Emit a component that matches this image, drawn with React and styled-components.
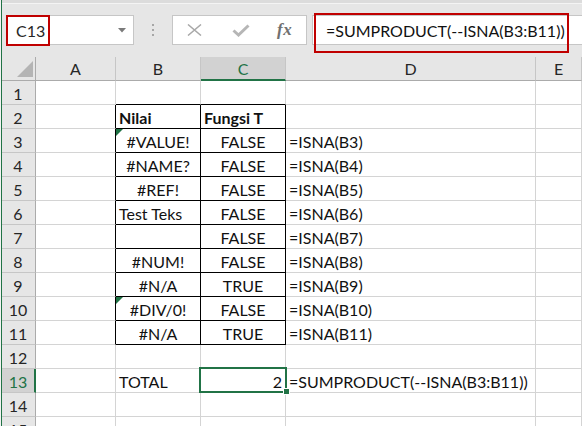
import React from 'react';
import styled, { createGlobalStyle } from 'styled-components';

const Global = createGlobalStyle`
  html, body { margin: 0; padding: 0; background: #fff; overflow: hidden; }
  body { font-family: Lato, "Liberation Sans", sans-serif; }
  #root { width: 582px; height: 426px; }
`;

const GREEN = '#217346';
const GRID = '#d4d4d4';

const Frame = styled.div`
  display: flex;
  width: 582px;
  height: 426px;
  overflow: hidden;
  background: #f3f3f3;
`;

const EdgeLine = styled.div`
  width: 1px;
  margin-left: 1px;
  background: ${GREEN};
  flex: none;
`;

const Main = styled.div`
  flex: 1;
  display: flex;
  flex-direction: column;
  min-width: 0;
  background: #fff;
`;

const Toolbar = styled.div`
  height: 57px;
  box-sizing: border-box;
  flex: none;
  display: flex;
  align-items: flex-start;
  padding: 15px 0 0 4px;
  background: #e6e6e6;
  box-shadow: inset 0 3px 0 #dcdcdc, inset 0 4px 0 #f4f4f4;
`;

const NameBox = styled.div`
  position: relative;
  width: 128px;
  height: 30px;
  box-sizing: border-box;
  flex: none;
  background: #fff;
  border: 1px solid #c6c6c6;
  display: flex;
  align-items: center;
  justify-content: space-between;
  padding: 1px 7px 0 9px;
  font-size: 16px;
  color: #262626;
`;

const RedMark = styled.div`
  position: absolute;
  box-sizing: border-box;
  border: 2px solid #c00000;
  pointer-events: none;
`;

const Grip = styled.div`
  display: flex;
  flex-direction: column;
  gap: 3px;
  margin: 9px 0 0 18px;
  flex: none;
  span {
    display: block;
    width: 2px;
    height: 2px;
    background: #a6a6a6;
  }
`;

const FxBox = styled.div`
  width: 135px;
  height: 30px;
  margin-left: 18px;
  box-sizing: border-box;
  flex: none;
  background: #fff;
  border: 1px solid #c6c6c6;
  display: flex;
  align-items: center;
  padding-left: 14px;
`;

const IconSlot = styled.div`
  display: flex;
  align-items: center;
  margin-left: ${p => p.$ml || 0}px;
  margin-top: ${p => p.$mt || 0}px;
`;

const FxText = styled.span`
  font-family: "Liberation Serif", "DejaVu Serif", serif;
  font-style: italic;
  font-weight: 700;
  font-size: 17px;
  color: #707070;
  letter-spacing: 0.5px;
`;

const FormulaInput = styled.div`
  position: relative;
  flex: 1;
  height: 30px;
  margin-left: 5px;
  box-sizing: border-box;
  background: #fff;
  border: 1px solid #c6c6c6;
  border-right: none;
  display: flex;
  align-items: center;
  padding: 1px 0 0 13px;
  font-size: 16px;
  color: #111;
  white-space: nowrap;
`;

const Sheet = styled.div`
  flex: 1;
  display: grid;
  grid-template-columns: 34px 80px 85px 85px 250px 1fr;
  grid-auto-rows: 24px;
  font-size: 16px;
  color: #111;
  background: #fff;
`;

const Corner = styled.div`
  box-sizing: border-box;
  background: #e6e6e6;
  border-right: 1px solid #ababab;
  border-bottom: 1px solid #ababab;
  display: flex;
  justify-content: flex-end;
  align-items: flex-end;
  padding: 0 2px 3px 0;
`;

const ColHead = styled.div`
  box-sizing: border-box;
  background: ${p => (p.$sel ? '#d2d2d2' : '#e6e6e6')};
  color: ${p => (p.$sel ? GREEN : '#262626')};
  border-right: 1px solid #c6c6c6;
  border-bottom: ${p => (p.$sel ? `2px solid ${GREEN}` : '1px solid #ababab')};
  display: flex;
  align-items: center;
  justify-content: center;
  padding-top: ${p => (p.$sel ? 1 : 0)}px;
`;

const RowHead = styled.div`
  box-sizing: border-box;
  background: ${p => (p.$sel ? '#d2d2d2' : '#e6e6e6')};
  color: ${p => (p.$sel ? GREEN : '#262626')};
  border-right: ${p => (p.$sel ? `2px solid ${GREEN}` : '1px solid #ababab')};
  border-bottom: 1px solid #c6c6c6;
  display: flex;
  align-items: center;
  justify-content: center;
  padding: 2px ${p => (p.$sel ? 0 : 1)}px 0 0;
`;

const Cell = styled.div`
  position: relative;
  box-sizing: border-box;
  border-right: 1px solid ${p => p.$br || GRID};
  border-bottom: 1px solid ${p => p.$bb || GRID};
  display: flex;
  align-items: center;
  justify-content: ${p => (p.$align === 'center' ? 'center' : p.$align === 'right' ? 'flex-end' : 'flex-start')};
  padding: 2px 3px 0 3px;
  font-weight: ${p => (p.$bold ? 700 : 400)};
  white-space: nowrap;
  z-index: ${p => (p.$sel ? 2 : 'auto')};
`;

const ErrorFlag = styled.svg`
  position: absolute;
  left: 0;
  top: 0;
`;

const Selection = styled.div`
  position: absolute;
  left: -2px;
  top: -2px;
  right: -2px;
  bottom: -1px;
  border: 2px solid ${GREEN};
  pointer-events: none;
`;

const FillHandle = styled.div`
  position: absolute;
  right: -5px;
  bottom: -3px;
  width: 5px;
  height: 5px;
  background: ${GREEN};
  border: 1px solid #fff;
`;

const COLS = ['A', 'B', 'C', 'D', 'E'];
const SEL_COL = 'C';
const SEL_ROW = 13;

const rows = [
  { n: 1 },
  { n: 2, b: 'Nilai', bAlign: 'left', c: 'Fungsi T', cAlign: 'left', bold: true },
  { n: 3, b: '#VALUE!', c: 'FALSE', d: '=ISNA(B3)', flag: true },
  { n: 4, b: '#NAME?', c: 'FALSE', d: '=ISNA(B4)' },
  { n: 5, b: '#REF!', c: 'FALSE', d: '=ISNA(B5)' },
  { n: 6, b: 'Test Teks', bAlign: 'left', c: 'FALSE', d: '=ISNA(B6)' },
  { n: 7, b: '', c: 'FALSE', d: '=ISNA(B7)' },
  { n: 8, b: '#NUM!', c: 'FALSE', d: '=ISNA(B8)' },
  { n: 9, b: '#N/A', c: 'TRUE', d: '=ISNA(B9)' },
  { n: 10, b: '#DIV/0!', c: 'FALSE', d: '=ISNA(B10)', flag: true },
  { n: 11, b: '#N/A', c: 'TRUE', d: '=ISNA(B11)' },
  { n: 12 },
  { n: 13, b: 'TOTAL', bAlign: 'left', c: '2', cAlign: 'right', d: '=SUMPRODUCT(--ISNA(B3:B11))' },
  { n: 14 },
  { n: 15 },
];

const inTable = n => n >= 2 && n <= 11;

function SheetRow({ r }) {
  const boxed = inTable(r.n);
  const topEdge = r.n === 1;
  const black = '#000';
  const sel = r.n === SEL_ROW;
  return (
    <>
      <RowHead $sel={sel}>{r.n}</RowHead>
      <Cell $br={boxed ? black : undefined} />
      <Cell
        $br={boxed ? black : undefined}
        $bb={boxed || topEdge ? black : undefined}
        $align={r.bAlign || 'center'}
        $bold={r.bold}
      >
        {r.flag && (
          <ErrorFlag width="7" height="7" viewBox="0 0 7 7">
            <polygon points="0,0 7,0 0,7" fill="#1f7244" />
          </ErrorFlag>
        )}
        {r.b}
      </Cell>
      <Cell
        $br={boxed ? black : undefined}
        $bb={boxed || topEdge ? black : undefined}
        $align={r.cAlign || 'center'}
        $bold={r.bold}
        $sel={sel}
      >
        {r.c}
        {sel && (
          <>
            <Selection />
            <FillHandle />
          </>
        )}
      </Cell>
      <Cell $align="left">{r.d}</Cell>
      <Cell />
    </>
  );
}

export default function App() {
  return (
    <>
      <Global />
      <Frame>
        <EdgeLine />
        <Main>
          <Toolbar>
            <NameBox>
              <span>C13</span>
              <svg width="8" height="5" viewBox="0 0 8 5">
                <polygon points="0,0 8,0 4,4.5" fill="#7a7a7a" />
              </svg>
              <RedMark style={{ left: -1, top: -1, width: 44, height: 31 }} />
            </NameBox>
            <Grip>
              <span />
              <span />
              <span />
            </Grip>
            <FxBox>
              <IconSlot>
                <svg width="15" height="12" viewBox="0 0 15 12">
                  <path d="M1 0.5 L14 11.5 M14 0.5 L1 11.5" stroke="#a8a8a8" strokeWidth="1.5" fill="none" />
                </svg>
              </IconSlot>
              <IconSlot $ml={30}>
                <svg width="18" height="13" viewBox="0 0 18 13">
                  <polyline points="1.5,6.5 6.5,11 16.5,1.5" stroke="#b6b6b6" strokeWidth="3" fill="none" />
                </svg>
              </IconSlot>
              <IconSlot $ml={27}>
                <FxText>fx</FxText>
              </IconSlot>
            </FxBox>
            <FormulaInput>
              =SUMPRODUCT(--ISNA(B3:B11))
              <RedMark style={{ left: 1, top: -3, width: 255, height: 40 }} />
            </FormulaInput>
          </Toolbar>
          <Sheet>
            <Corner>
              <svg width="16" height="16" viewBox="0 0 16 16">
                <polygon points="0,16 16,16 16,0" fill="#b4b4b4" />
              </svg>
            </Corner>
            {COLS.map(c => (
              <ColHead key={c} $sel={c === SEL_COL}>
                {c}
              </ColHead>
            ))}
            {rows.map(r => (
              <SheetRow key={r.n} r={r} />
            ))}
          </Sheet>
        </Main>
      </Frame>
    </>
  );
}
